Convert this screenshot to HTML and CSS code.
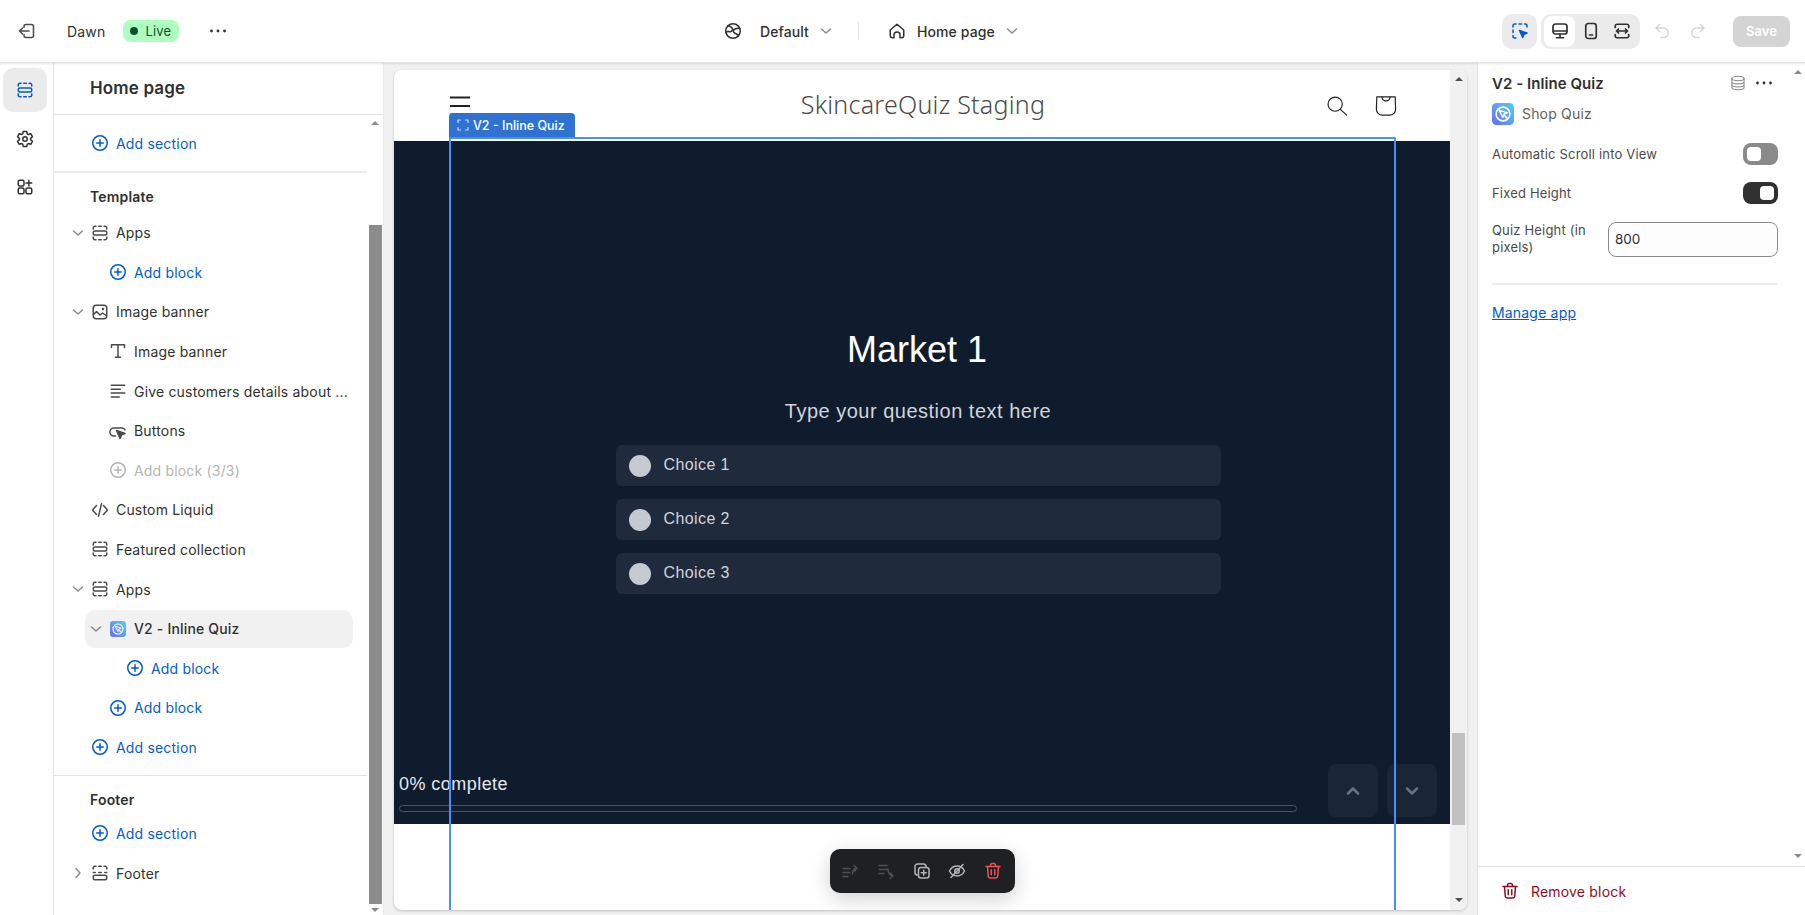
FILE: index.html
```html
<!DOCTYPE html>
<html lang="en">
<head>
    <meta charset="UTF-8">
    <meta name="viewport" content="width=device-width, initial-scale=1.0">
    <title>Dawn - Home page</title>
    <link rel="stylesheet" href="styles.css">
</head>
<body>
    <!-- icon sprite -->
    <svg class="sprite" xmlns="http://www.w3.org/2000/svg">
        <defs>
            <linearGradient id="logo-grad" x1="0" y1="1" x2="1" y2="0">
                <stop offset="0" stop-color="#6a6cf6"/>
                <stop offset="1" stop-color="#4fd0f5"/>
            </linearGradient>
        </defs>
        <symbol id="i-exit" viewBox="0 0 20 20"><path d="M7 6.5V5.5a2 2 0 0 1 2-2h5.5a2 2 0 0 1 2 2v9a2 2 0 0 1-2 2H9a2 2 0 0 1-2-2v-1"/><path d="M12 10H2.5M5.5 7l-3 3 3 3"/></symbol>
        <symbol id="i-dots" viewBox="0 0 20 20"><g fill="currentColor" stroke="none"><circle cx="3.5" cy="10" r="1.4"/><circle cx="10" cy="10" r="1.4"/><circle cx="16.5" cy="10" r="1.4"/></g></symbol>
        <symbol id="i-section" viewBox="0 0 20 20"><path d="M3.25 6V5a1.75 1.75 0 0 1 1.75-1.75h1M8.75 3.25h2.5M14 3.25h1A1.75 1.75 0 0 1 16.75 5v1"/><rect x="3.25" y="8" width="13.5" height="4" rx="1.5"/><path d="M3.25 14v1A1.75 1.75 0 0 0 5 16.75h1M8.75 16.75h2.5M14 16.75h1A1.75 1.75 0 0 0 16.75 15v-1"/></symbol>
        <symbol id="i-footer" viewBox="0 0 20 20"><path d="M3.25 6V5a1.75 1.75 0 0 1 1.75-1.75h1M8.75 3.25h2.5M14 3.25h1A1.75 1.75 0 0 1 16.75 5v1M3.25 9.5h2M8.75 9.5h2.5M14.75 9.5h2"/><rect x="3.25" y="12.25" width="13.5" height="4.5" rx="1.75"/></symbol>
        <symbol id="i-gear" viewBox="0 0 20 20"><path d="M7.72 4.88 8.25 2.4h3.5l.53 2.48 1.01.59 2.41-.79 1.76 3.04-1.89 1.69v1.18l1.89 1.69-1.76 3.04-2.41-.79-1.01.59-.53 2.48h-3.5l-.53-2.48-1.01-.59-2.41.79-1.76-3.04 1.89-1.69V9.41L2.54 7.72 4.3 4.68l2.41.79z"/><circle cx="10" cy="10" r="2.25"/></symbol>
        <symbol id="i-apps" viewBox="0 0 20 20"><rect x="3.25" y="3.25" width="5.75" height="5.75" rx="1.5"/><rect x="3.25" y="11" width="5.75" height="5.75" rx="1.5"/><rect x="11" y="11" width="5.75" height="5.75" rx="1.5"/><path d="M13.9 3.25V9M11 6.1h5.75"/></symbol>
        <symbol id="i-plus" viewBox="0 0 20 20"><circle cx="10" cy="10" r="7.25"/><path d="M10 6.75v6.5M6.75 10h6.5"/></symbol>
        <symbol id="i-chev" viewBox="0 0 16 16"><path d="M3.5 6 8 10l4.5-4"/></symbol>
        <symbol id="i-chev-r" viewBox="0 0 16 16"><path d="m6 3.5 4 4.5-4 4.5"/></symbol>
        <symbol id="i-image" viewBox="0 0 20 20"><rect x="3.25" y="3.25" width="13.5" height="13.5" rx="3"/><path d="m3.5 12.500 3-3 3.500 3.500 2.500-2 3.500 2.500"/><circle cx="13" cy="7" r="1.2" fill="currentColor" stroke="none"/></symbol>
        <symbol id="i-text" viewBox="0 0 20 20"><path d="M3.5 6.500V3.750h13V6.500M10 3.750v12.500M7.500 16.250h5"/></symbol>
        <symbol id="i-para" viewBox="0 0 20 20"><path d="M3.25 4.25h13.5M3.25 8.25h9M3.25 12h13.5M3.25 16h8"/></symbol>
        <symbol id="i-button" viewBox="0 0 20 20"><path d="M7.500 15H6a4 4 0 0 1-.25-8h8.500a3.250 3.250 0 0 1 2.750 2"/><path d="m8.500 9.500 8.500 3-3.500 1.400L12 17.500z" fill="currentColor"/></symbol>
        <symbol id="i-code" viewBox="0 0 20 20"><path d="M6.5 5.5 2.5 10l4 4.5M13.5 5.5l4 4.5-4 4.5M11.5 3.75l-3 12.5"/></symbol>
        <symbol id="i-logo" viewBox="0 0 20 20"><rect width="20" height="20" rx="4" fill="url(#logo-grad)" stroke="none"/><circle cx="10" cy="10" r="6.250" fill="none" stroke="#fff" stroke-width="1.400"/><path d="m6.500 6.500 7.500 2.500-3 1.200-1.200 3z" fill="#7d9bf7" stroke="#fff" stroke-width="1.200" stroke-linejoin="round"/><path d="m11 11 3.500 3.500" fill="none" stroke="#fff" stroke-width="1.400"/></symbol>
        <symbol id="i-globe" viewBox="0 0 20 20"><circle cx="10" cy="10" r="7.25"/><path d="M5 4.8c2.5.6 4.5 1.800 4.5 3.800S7 11 5.500 10.500 3.600 11 2.900 11.500M15.500 15c-.5-1.800-2.500-2.500-4-3s-1.500-3.200.5-4 3.500-1.200 4.700-.5"/></symbol>
        <symbol id="i-home" viewBox="0 0 20 20"><path d="M3.25 9 10 3.25 16.750 9v5.500a2.250 2.250 0 0 1-2.250 2.250H13V14a3 3 0 0 0-6 0v2.750H5.500a2.250 2.250 0 0 1-2.250-2.250z"/></symbol>
        <symbol id="i-select" viewBox="0 0 20 20"><path d="M6 3h-1.250A1.750 1.750 0 0 0 3 4.750V6M9 3h2.500M14.500 3h.75A1.750 1.750 0 0 1 17 4.750V6M3 9v2.500M3 14.500v.75A1.750 1.750 0 0 0 4.750 17H6"/><path d="m9.500 9.500 7.500 2.500-3 1.300-1.300 3.200z" fill="currentColor"/></symbol>
        <symbol id="i-desktop" viewBox="0 0 20 20"><rect x="3" y="3" width="14" height="10" rx="2.500"/><path d="M3.500 10h13M10 13v3.500M6.500 16.750h7"/></symbol>
        <symbol id="i-mobile" viewBox="0 0 20 20"><rect x="4.750" y="2.500" width="10.500" height="15" rx="2.500"/><path d="M8.500 14h3"/></symbol>
        <symbol id="i-expand" viewBox="0 0 20 20"><path d="M3.250 6.500V5A1.750 1.750 0 0 1 5 3.250h10A1.750 1.750 0 0 1 16.750 5v1.500M3.250 13.500V15A1.750 1.750 0 0 0 5 16.750h10A1.750 1.750 0 0 0 16.750 15v-1.500M4.500 10h11M6.500 8l-2 2 2 2M13.500 8l2 2-2 2"/></symbol>
        <symbol id="i-undo" viewBox="0 0 20 20"><path d="M7.500 3.500 4 7l3.500 3.500M4 7h7.500a4.750 4.750 0 0 1 0 9.500H9"/></symbol>
        <symbol id="i-redo" viewBox="0 0 20 20"><path d="M12.500 3.500 16 7l-3.500 3.500M16 7H8.500a4.750 4.750 0 0 0 0 9.500H11"/></symbol>
        <symbol id="i-db" viewBox="0 0 20 20"><ellipse cx="10" cy="5" rx="6.750" ry="2.500"/><path d="M3.250 5v10c0 1.400 3 2.500 6.750 2.500s6.750-1.100 6.750-2.500V5M3.250 8.500c0 1.400 3 2.500 6.750 2.500s6.750-1.100 6.750-2.500M3.250 12c0 1.400 3 2.500 6.750 2.500s6.750-1.100 6.750-2.500"/></symbol>
        <symbol id="i-trash" viewBox="0 0 20 20"><path d="M3 5.500h14M7.500 5.500V4.250A1.750 1.750 0 0 1 9.250 2.500h1.500a1.750 1.750 0 0 1 1.750 1.750V5.500M4.500 5.500l.75 9.500a2.250 2.250 0 0 0 2.250 2h5a2.250 2.250 0 0 0 2.250-2l.75-9.500M8.250 8.750v5M11.750 8.750v5"/></symbol>
        <symbol id="i-up-lines" viewBox="0 0 20 20"><path d="M3 7.500h7M3 11.500h7M3 15.500h5M12.500 13c0-3.500 1-5.500 4-6M14 4.500l3 2.500-2.500 3"/></symbol>
        <symbol id="i-down-lines" viewBox="0 0 20 20"><path d="M3 4.500h8M3 8.500h8M3 12.500h5M12 8c0 4 1.500 6.500 5 7M14 17.500l3-2.500-2.500-3"/></symbol>
        <symbol id="i-dup" viewBox="0 0 20 20"><path d="M5.500 14A2.500 2.500 0 0 1 3 11.500v-6A2.500 2.500 0 0 1 5.500 3h6A2.500 2.500 0 0 1 14 5.500"/><rect x="6.500" y="6.500" width="10.500" height="10.500" rx="2.500"/><path d="M11.750 9.250v5M9.250 11.750h5"/></symbol>
        <symbol id="i-eye" viewBox="0 0 20 20"><path d="M2.500 10S5 5 10 5s7.500 5 7.500 5-2.500 5-7.500 5-7.500-5-7.500-5z"/><circle cx="10" cy="10" r="2.250"/><path d="M4 16.500 16 3.500"/></symbol>
        <symbol id="i-search" viewBox="0 0 24 24"><circle cx="10" cy="10" r="7.750"/><path d="m15.700 15.700 6.800 6.300"/></symbol>
        <symbol id="i-bag" viewBox="0 0 24 24"><path d="M2 2h20l.5 13.500a6.500 6.500 0 0 1-6.500 6.500H8a6.500 6.500 0 0 1-6.500-6.500z"/><path d="M7.500 2a4.500 4.500 0 0 0 9 0"/></symbol>
        <symbol id="i-burger" viewBox="0 0 20 20"><path d="M0 1.500h20M0 10h20M0 18.500h20"/></symbol>
        <symbol id="i-frame" viewBox="0 0 12 12"><path d="M1 3.500V1h2.500M8.500 1H11v2.500M1 8.500V11h2.500M8.500 11H11V8.500"/></symbol>
        <symbol id="i-up" viewBox="0 0 16 16"><path d="M3 10.500 8 5.500l5 5"/></symbol>
        <symbol id="i-down" viewBox="0 0 16 16"><path d="m3 5.500 5 5 5-5"/></symbol>
    </svg>

    <header class="topbar">
        <div class="top-left">
            <svg class="ic exit"><use href="#i-exit"/></svg>
            <span class="theme-name">Dawn</span>
            <span class="live"><i class="live-dot"></i>Live</span>
            <svg class="ic top-dots"><use href="#i-dots"/></svg>
        </div>
        <div class="top-center">
            <svg class="ic"><use href="#i-globe"/></svg>
            <span class="picker-label">Default</span>
            <svg class="ic chev-top"><use href="#i-chev"/></svg>
            <span class="top-sep"></span>
            <svg class="ic"><use href="#i-home"/></svg>
            <span class="picker-label home-label">Home page</span>
            <svg class="ic chev-top"><use href="#i-chev"/></svg>
        </div>
        <div class="top-right">
            <span class="tool-btn"><svg class="ic blue"><use href="#i-select"/></svg></span>
            <div class="view-group">
                <span class="view-btn active"><svg class="ic"><use href="#i-desktop"/></svg></span>
                <span class="view-btn"><svg class="ic"><use href="#i-mobile"/></svg></span>
                <span class="view-btn"><svg class="ic"><use href="#i-expand"/></svg></span>
            </div>
            <svg class="ic muted undo"><use href="#i-undo"/></svg>
            <svg class="ic muted redo"><use href="#i-redo"/></svg>
            <button class="save" type="button">Save</button>
        </div>
    </header>

    <div class="main">
        <nav class="rail">
            <span class="rail-btn active"><svg class="ic blue"><use href="#i-section"/></svg></span>
            <span class="rail-btn"><svg class="ic"><use href="#i-gear"/></svg></span>
            <span class="rail-btn"><svg class="ic"><use href="#i-apps"/></svg></span>
        </nav>

        <aside class="sidebar">
            <div class="side-head">Home page</div>
            <div class="side-body">
                <div class="tree">
                    <div class="row lvl1 add"><svg class="ic"><use href="#i-plus"/></svg>Add section</div>
                    <div class="thick-line"></div>
                    <div class="tree-title">Template</div>
                    <div class="row lvl1"><svg class="ic chev"><use href="#i-chev"/></svg><svg class="ic"><use href="#i-section"/></svg>Apps</div>
                    <div class="row lvl2 add"><svg class="ic"><use href="#i-plus"/></svg>Add block</div>
                    <div class="row lvl1"><svg class="ic chev"><use href="#i-chev"/></svg><svg class="ic"><use href="#i-image"/></svg>Image banner</div>
                    <div class="row lvl2"><svg class="ic"><use href="#i-text"/></svg>Image banner</div>
                    <div class="row lvl2"><svg class="ic"><use href="#i-para"/></svg>Give customers details about ...</div>
                    <div class="row lvl2"><svg class="ic"><use href="#i-button"/></svg>Buttons</div>
                    <div class="row lvl2 disabled"><svg class="ic"><use href="#i-plus"/></svg>Add block (3/3)</div>
                    <div class="row lvl1"><svg class="ic"><use href="#i-code"/></svg>Custom Liquid</div>
                    <div class="row lvl1"><svg class="ic"><use href="#i-section"/></svg>Featured collection</div>
                    <div class="row lvl1"><svg class="ic chev"><use href="#i-chev"/></svg><svg class="ic"><use href="#i-section"/></svg>Apps</div>
                    <div class="row lvl2 selected"><svg class="ic chev"><use href="#i-chev"/></svg><svg class="logo-sm"><use href="#i-logo"/></svg>V2 - Inline Quiz</div>
                    <div class="row lvl3 add"><svg class="ic"><use href="#i-plus"/></svg>Add block</div>
                    <div class="row lvl2 add"><svg class="ic"><use href="#i-plus"/></svg>Add block</div>
                    <div class="row lvl1 add"><svg class="ic"><use href="#i-plus"/></svg>Add section</div>
                    <div class="thin-line"></div>
                    <div class="tree-title">Footer</div>
                    <div class="row lvl1 add"><svg class="ic"><use href="#i-plus"/></svg>Add section</div>
                    <div class="row lvl1"><svg class="ic chev"><use href="#i-chev-r"/></svg><svg class="ic"><use href="#i-footer"/></svg>Footer</div>
                </div>
                <div class="side-scroll">
                    <span class="arrow-up"></span>
                    <div class="side-thumb"></div>
                    <span class="arrow-down"></span>
                </div>
            </div>
        </aside>

        <section class="preview">
            <div class="frame">
                <div class="page">
                    <div class="store-head">
                        <svg class="ic burger"><use href="#i-burger"/></svg>
                        <span class="store-name">SkincareQuiz Staging</span>
                        <svg class="ic store-ic search"><use href="#i-search"/></svg>
                        <svg class="ic store-ic"><use href="#i-bag"/></svg>
                    </div>
                    <div class="quiz">
                        <h1>Market 1</h1>
                        <p class="question">Type your question text here</p>
                        <div class="choices">
                            <div class="choice"><i class="dot"></i><span>Choice 1</span></div>
                            <div class="choice"><i class="dot"></i><span>Choice 2</span></div>
                            <div class="choice"><i class="dot"></i><span>Choice 3</span></div>
                        </div>
                        <div class="quiz-foot">
                            <div class="progress">
                                <div class="progress-text">0% complete</div>
                                <div class="progress-bar"></div>
                            </div>
                            <span class="nav-btn"><svg class="ic"><use href="#i-up"/></svg></span>
                            <span class="nav-btn"><svg class="ic"><use href="#i-down"/></svg></span>
                        </div>
                    </div>
                </div>
                <div class="frame-scroll">
                    <span class="arrow-up dark"></span>
                    <div class="frame-thumb"></div>
                    <span class="arrow-down dark"></span>
                </div>

                <!-- selection overlay -->
                <div class="sel-label"><svg class="ic"><use href="#i-frame"/></svg>V2 - Inline Quiz</div>
                <div class="sel-box"></div>
                <div class="float-bar">
                    <svg class="ic off"><use href="#i-up-lines"/></svg>
                    <svg class="ic off"><use href="#i-down-lines"/></svg>
                    <svg class="ic on"><use href="#i-dup"/></svg>
                    <svg class="ic on"><use href="#i-eye"/></svg>
                    <svg class="ic red"><use href="#i-trash"/></svg>
                </div>
            </div>
        </section>

        <aside class="panel">
            <div class="panel-body">
                <div class="panel-content">
                    <div class="panel-title">
                        <span>V2 - Inline Quiz</span>
                        <svg class="ic db"><use href="#i-db"/></svg>
                        <svg class="ic"><use href="#i-dots"/></svg>
                    </div>
                    <div class="app-row"><svg class="logo-lg"><use href="#i-logo"/></svg><span>Shop Quiz</span></div>
                    <div class="field auto-field">
                        <span class="field-text">Automatic Scroll into View</span>
                        <span class="toggle"><i></i></span>
                    </div>
                    <div class="field fixed-field">
                        <span class="field-text">Fixed Height</span>
                        <span class="toggle on"><i></i></span>
                    </div>
                    <div class="field height-field">
                        <label class="field-text" for="quiz-height">Quiz Height (in pixels)</label>
                        <input id="quiz-height" type="text" value="800">
                    </div>
                    <div class="panel-line"></div>
                    <a href="#" class="manage">Manage app</a>
                </div>
                <div class="panel-scroll">
                    <span class="arrow-up"></span>
                    <span class="arrow-down"></span>
                </div>
            </div>
            <div class="panel-foot">
                <svg class="ic"><use href="#i-trash"/></svg>
                <span>Remove block</span>
            </div>
        </aside>
    </div>
</body>
</html>
```

FILE: styles.css
```css
* {
    box-sizing: border-box;
}
html, body {
    height: 100%;
}
body {
    margin: 0;
    overflow: hidden;
    display: flex;
    flex-direction: column;
    font-family: Inter, "Liberation Sans", sans-serif;
    font-size: 14px;
    letter-spacing: 0.18px;
    color: #303030;
    background: #fff;
}
.sprite {
    position: absolute;
    width: 0;
    height: 0;
}
.ic {
    width: 20px;
    height: 20px;
    flex: none;
    fill: none;
    stroke: currentColor;
    stroke-width: 1.5;
    stroke-linecap: round;
    stroke-linejoin: round;
}
.blue {
    color: #005bd3;
}

/* top bar */
.topbar {
    flex: none;
    height: 63px;
    display: flex;
    align-items: center;
    background: #fff;
    border-bottom: 1px solid #e3e3e3;
    box-shadow: 0 1px 2px rgba(0, 0, 0, 0.1);
    position: relative;
    z-index: 2;
}
.top-left {
    flex: 0 0 723px;
    display: flex;
    align-items: center;
    padding-left: 17px;
}
.exit {
    color: #4a4a4a;
}
.theme-name {
    margin-left: 30px;
}
.live {
    display: flex;
    align-items: center;
    height: 22px;
    width: 56px;
    margin-left: 18px;
    padding-left: 7px;
    background: #aefebf;
    border-radius: 8px;
    font-size: 13px;
    color: #0c5132;
}
.live-dot {
    width: 8px;
    height: 8px;
    margin-right: 7px;
    border-radius: 50%;
    background: #0c5132;
}
.top-dots {
    margin-left: 29px;
}
.top-center {
    flex: 1;
    display: flex;
    align-items: center;
}
.picker-label {
    margin-left: 17px;
    font-weight: 500;
    letter-spacing: 0.1px;
}
.home-label {
    margin-left: 10px;
}
.chev-top {
    width: 16px;
    height: 16px;
    margin-left: 9px;
    color: #8a8a8a;
}
.top-sep {
    width: 1px;
    height: 18px;
    margin: 0 28px 0 24px;
    background: #e3e3e3;
}
.top-right {
    display: flex;
    align-items: center;
    padding-right: 15px;
}
.tool-btn {
    width: 35px;
    height: 35px;
    display: flex;
    align-items: center;
    justify-content: center;
    background: #ebebeb;
    border-radius: 10px;
}
.view-group {
    display: flex;
    align-items: center;
    width: 99px;
    height: 35px;
    margin-left: 4px;
    padding: 0 3px;
    background: #ebebeb;
    border-radius: 10px;
}
.view-btn {
    width: 31px;
    height: 31px;
    display: flex;
    align-items: center;
    justify-content: center;
    border-radius: 8px;
}
.view-btn .ic {
    stroke-width: 1.7;
}
.view-btn.active {
    background: #fff;
}
.muted {
    color: #d4d4d4;
}
.undo {
    margin-left: 12px;
}
.redo {
    margin-left: 16px;
}
.save {
    width: 57px;
    height: 31px;
    margin-left: 25px;
    border: none;
    border-radius: 8px;
    background: #d4d4d4;
    color: #fff;
    font: 600 13px Inter, sans-serif;
}

/* layout */
.main {
    flex: 1;
    min-height: 0;
    display: flex;
}
.rail {
    flex: 0 0 54px;
    padding-top: 5px;
    border-right: 1px solid #e3e3e3;
    display: flex;
    flex-direction: column;
}
.rail-btn {
    width: 44px;
    height: 44px;
    margin: 0 0 4.5px 3px;
    display: flex;
    align-items: center;
    justify-content: center;
    border-radius: 10px;
}
.rail-btn.active {
    background: #ebebeb;
}

/* sidebar */
.sidebar {
    flex: 0 0 330px;
    display: flex;
    flex-direction: column;
    border-right: 1px solid #ebebeb;
}
.side-head {
    flex: none;
    height: 52px;
    padding: 15px 0 0 36px;
    font-size: 17px;
    font-weight: 600;
    letter-spacing: 0.15px;
    border-bottom: 1px solid #e3e3e3;
}
.side-body {
    flex: 1;
    min-height: 0;
    display: flex;
}
.tree {
    flex: 1;
    padding-top: 8.6px;
}
.row {
    height: 39.6px;
    display: flex;
    align-items: center;
    white-space: nowrap;
}
.row > .ic:not(.chev) {
    margin-right: 6px;
}
.lvl1 {
    padding-left: 36px;
}
.lvl2 {
    padding-left: 54px;
}
.lvl3 {
    padding-left: 71px;
}
.row .ic {
    color: #4a4a4a;
}
.add, .row.add .ic {
    color: #005bd3;
}
.disabled, .row.disabled .ic {
    color: #b5b5b5;
}
.row .chev {
    width: 16px;
    height: 16px;
    margin: 0 4px 0 -20px;
    color: #8a8a8a;
}
.selected {
    height: 38px;
    margin: 0.8px 14px 0.8px 31px;
    padding-left: 23px;
    background: #f1f1f1;
    border-radius: 10px;
    font-weight: 500;
}
.logo-sm {
    width: 16px;
    height: 16px;
    margin: 0 8px 0 2px;
    flex: none;
}
.thick-line {
    height: 2px;
    margin-top: 8px;
    background: #ebebeb;
}
.thin-line {
    height: 1px;
    margin-top: 8px;
    background: #e3e3e3;
}
.tree-title {
    height: 20px;
    margin: 14px 0 3.5px 36px;
    line-height: 20px;
    font-weight: 600;
}
.thick-line + .tree-title {
    margin-bottom: 5.7px;
    line-height: 19px;
}
.side-scroll {
    flex: 0 0 16px;
    display: flex;
    flex-direction: column;
    align-items: center;
    padding: 6px 1px 3px 1px;
}
.side-thumb {
    width: 13px;
    height: 679px;
    margin-top: auto;
    background: #8c8c8c;
}
.arrow-up, .arrow-down {
    width: 0;
    height: 0;
    flex: none;
    border-left: 4px solid transparent;
    border-right: 4px solid transparent;
}
.arrow-up {
    border-bottom: 4px solid #8c8c8c;
}
.arrow-down {
    margin-top: 4px;
    border-top: 4px solid #8c8c8c;
}
.arrow-up.dark {
    border-bottom-color: #505050;
}
.arrow-down.dark {
    border-top-color: #505050;
}

/* preview */
.preview {
    flex: 1;
    min-width: 0;
    padding: 7px 10px 5px 10px;
    background: #f1f1f1;
}
.frame {
    position: relative;
    height: 100%;
    display: flex;
    background: #fff;
    border-radius: 8px;
    overflow: hidden;
    box-shadow: 0 1px 3px rgba(0, 0, 0, 0.2);
}
.page {
    flex: 1;
    min-width: 0;
}
.frame-scroll {
    flex: 0 0 17px;
    display: flex;
    flex-direction: column;
    align-items: center;
    padding: 7px 0 8px;
    background: #f1f1f1;
}
.frame-thumb {
    width: 13px;
    height: 92px;
    margin-top: 652px;
    background: #c1c1c1;
}
.frame-scroll .arrow-down {
    margin-top: auto;
}
.store-head {
    height: 71px;
    display: flex;
    align-items: center;
    padding: 0 53px 0 56px;
}
.burger {
    color: #222;
    stroke-width: 2;
    overflow: visible;
}
.store-name {
    flex: 1;
    padding: 0 0 4px 50px;
    text-align: center;
    font-family: "Noto Sans", sans-serif;
    font-size: 25px;
    font-weight: 300;
    letter-spacing: 0.25px;
    color: #4a4a4a;
}
.store-ic {
    width: 22px;
    height: 22px;
    color: #222;
    stroke-width: 1.3;
}
.search {
    margin-right: 27px;
}

/* quiz */
.quiz {
    height: 683px;
    padding: 189px 13px 7px 5px;
    display: flex;
    flex-direction: column;
    background: #0f1c2e;
    font-family: "Liberation Sans", Arial, sans-serif;
    letter-spacing: 0;
}
h1 {
    margin: 0;
    padding-right: 2px;
    text-align: center;
    font-size: 36px;
    font-weight: 400;
    line-height: 40px;
    color: #fff;
}
.question {
    margin: 27px 0 0;
    text-align: center;
    font-size: 20px;
    line-height: 28px;
    letter-spacing: 0.5px;
    color: #d1d5db;
}
.choices {
    width: 605px;
    margin: 20px auto 0;
    display: flex;
    flex-direction: column;
    gap: 13px;
}
.choice {
    height: 41px;
    display: flex;
    align-items: center;
    padding-left: 13px;
    background: #1f2a3d;
    border-radius: 6px;
    font-size: 16px;
    letter-spacing: 0.4px;
    color: #d1d5db;
}
.choice span {
    padding-bottom: 1px;
}
.dot {
    width: 22px;
    height: 22px;
    margin-right: 13px;
    border-radius: 50%;
    background: #c6cad0;
}
.quiz-foot {
    margin-top: auto;
    display: flex;
    align-items: flex-end;
    gap: 9px;
}
.progress {
    flex: 1;
    margin-right: 22px;
    padding-bottom: 5px;
}
.progress-text {
    font-size: 18px;
    line-height: 24px;
    letter-spacing: 0.45px;
    color: #e5e7eb;
}
.progress-bar {
    height: 7px;
    margin-top: 9px;
    border: 1px solid #4b5563;
    border-radius: 4px;
}
.nav-btn {
    width: 50px;
    height: 53px;
    display: flex;
    align-items: center;
    justify-content: center;
    background: #1a2636;
    border-radius: 8px;
    color: #6b7280;
}
.nav-btn .ic {
    width: 16px;
    height: 16px;
    stroke-width: 2.5;
}

/* selection overlay */
.sel-label {
    position: absolute;
    left: 55px;
    top: 43px;
    width: 126px;
    height: 25px;
    display: flex;
    align-items: center;
    padding: 0 0 1px 8px;
    background: #2f72d2;
    border-radius: 4px 4px 0 0;
    color: #fff;
    font-size: 12.5px;
    font-weight: 500;
    letter-spacing: 0;
}
.sel-label .ic {
    width: 12px;
    height: 12px;
    margin-right: 4px;
    color: #c7dcf7;
    stroke-width: 1.2;
}
.sel-box {
    position: absolute;
    left: 55px;
    top: 67px;
    bottom: 0;
    width: 947px;
    border: 2px solid #458fff;
    border-bottom: none;
    border-radius: 2px 2px 0 0;
    pointer-events: none;
}
.float-bar {
    position: absolute;
    left: 436px;
    top: 779px;
    width: 185px;
    height: 44px;
    display: flex;
    align-items: center;
    justify-content: space-between;
    padding: 0 12px 0 10px;
    background: #1f2022;
    border-radius: 10px;
    box-shadow: 0 6px 20px rgba(0, 0, 0, 0.18);
}
.float-bar .off {
    color: #4f4f4f;
}
.float-bar .on {
    color: #b5b5b5;
}
.float-bar .red {
    color: #f05252;
}

/* right panel */
.panel {
    flex: 0 0 328px;
    display: flex;
    flex-direction: column;
    border-left: 1px solid #e3e3e3;
}
.panel-body {
    flex: 1;
    min-height: 0;
    display: flex;
}
.panel-content {
    flex: 1;
    min-width: 0;
    padding: 10px 13px 0 14px;
    font-size: 13px;
    color: #4a4a4a;
}
.panel-title {
    height: 20px;
    display: flex;
    align-items: center;
    font-size: 15px;
    font-weight: 600;
    letter-spacing: 0.05px;
    color: #303030;
}
.panel-title span {
    flex: 1;
}
.panel-title .ic {
    margin-right: 4px;
}
.panel-title .db {
    margin-right: 7px;
    color: #8a8a8a;
    stroke-width: 1.2;
    width: 18px;
    height: 18px;
}
.app-row {
    height: 22px;
    margin-top: 10px;
    display: flex;
    align-items: center;
    font-size: 14px;
    color: #616161;
}
.app-row span {
    padding-bottom: 2px;
}
.logo-lg {
    width: 22px;
    height: 22px;
    margin-right: 8px;
    flex: none;
}
.field {
    display: flex;
    align-items: center;
    justify-content: space-between;
}
.field-text {
    padding-bottom: 1px;
}
.auto-field {
    margin-top: 18px;
}
.fixed-field {
    margin-top: 17px;
}
.height-field {
    margin-top: 18px;
}
.height-field label {
    width: 104px;
    line-height: 17px;
}
.toggle {
    width: 35px;
    height: 22px;
    padding: 4px;
    display: flex;
    background: #8a8a8a;
    border-radius: 8px;
}
.toggle i {
    width: 14px;
    height: 14px;
    background: #fff;
    border-radius: 4px;
}
.toggle.on {
    justify-content: flex-end;
    background: #303030;
}
input {
    width: 170px;
    height: 35px;
    padding: 0 6px 2px;
    border: 1px solid #8a8a8a;
    border-radius: 8px;
    background: #fdfdfd;
    font: 13.5px Inter, sans-serif;
    color: #303030;
}
.panel-line {
    height: 2px;
    margin-top: 26px;
    background: #ebebeb;
}
.manage {
    display: block;
    margin-top: 18px;
    line-height: 20px;
    font-size: 14px;
    color: #005bd3;
}
.panel-scroll {
    flex: 0 0 14px;
    display: flex;
    flex-direction: column;
    justify-content: space-between;
    align-items: center;
    padding: 7px 0 8px;
}
.panel-foot {
    flex: 0 0 49px;
    display: flex;
    align-items: center;
    gap: 11px;
    padding-left: 22px;
    border-top: 1px solid #e3e3e3;
    color: #8e0b21;
}
```
